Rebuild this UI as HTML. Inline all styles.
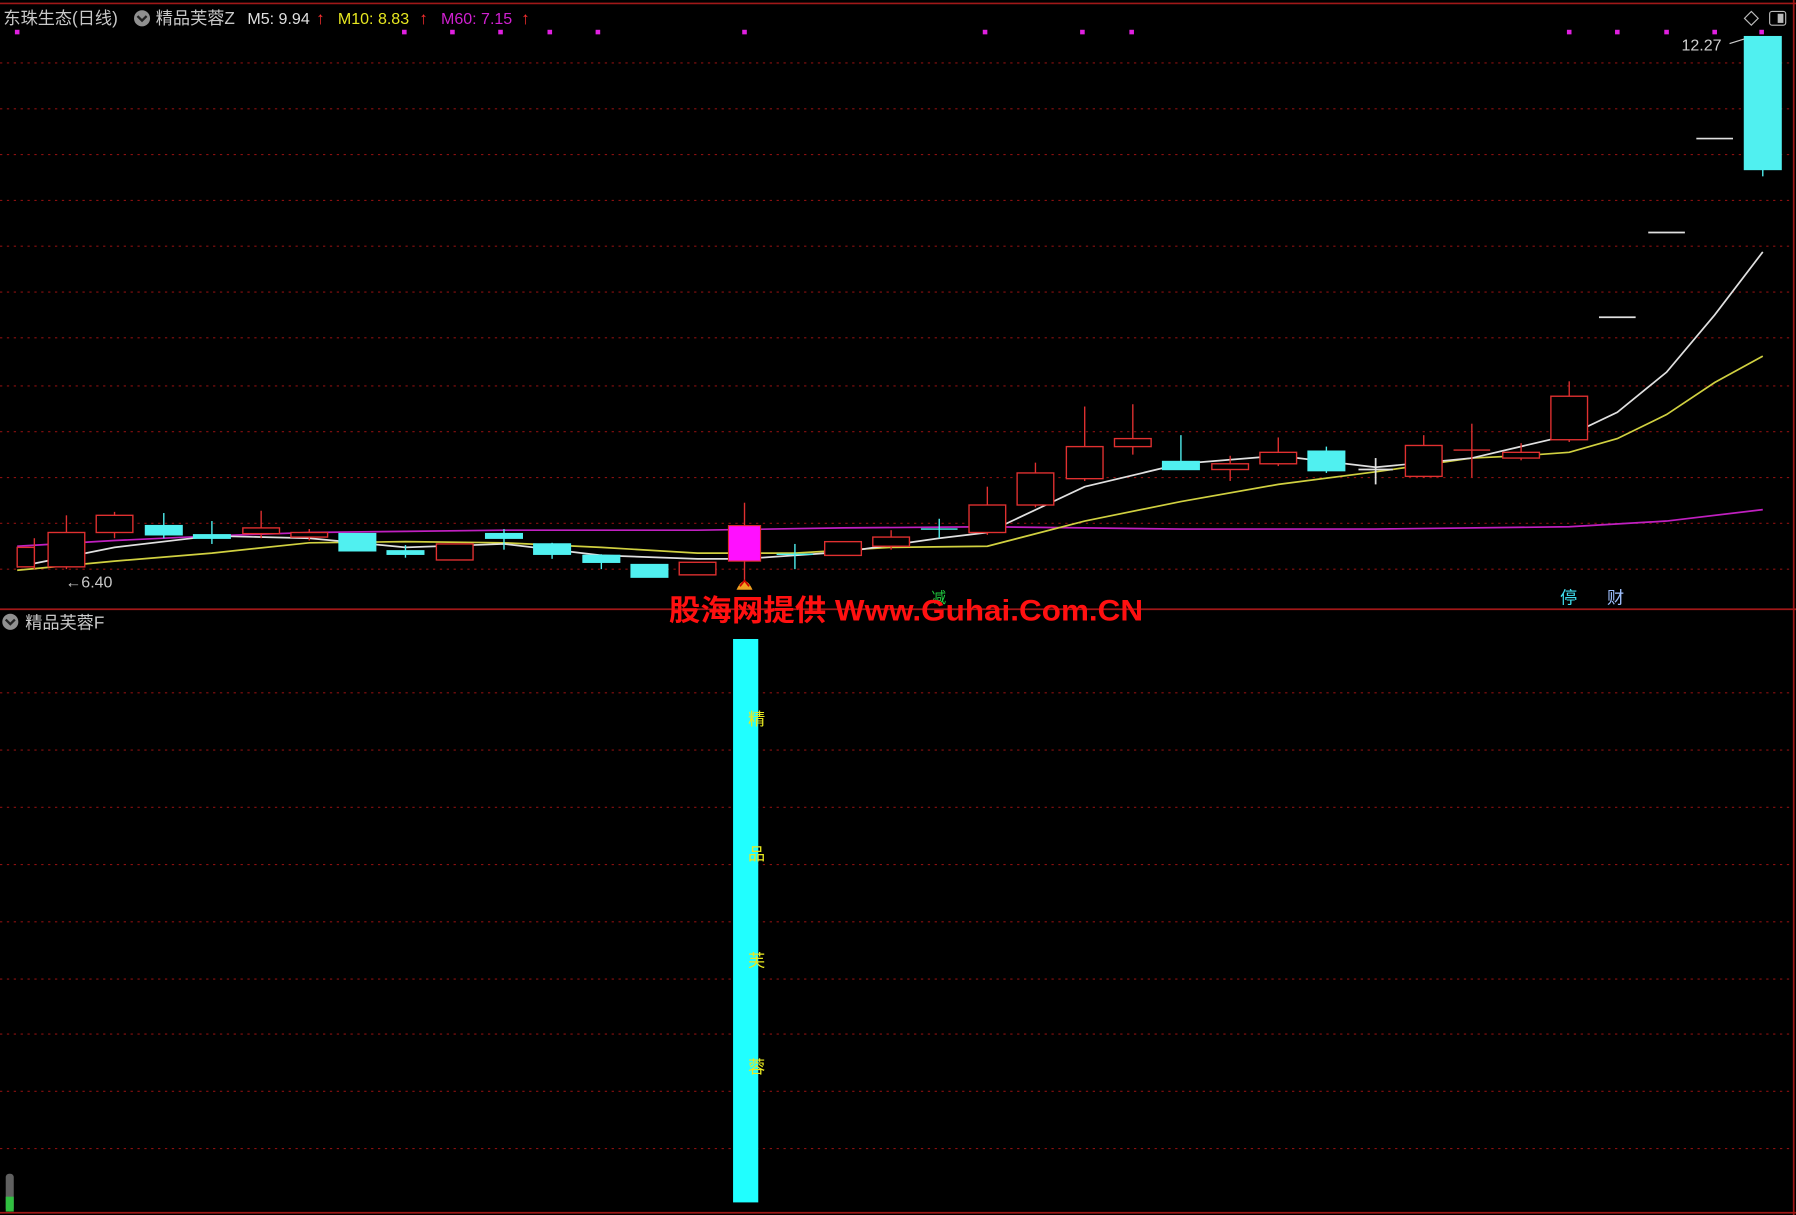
<!DOCTYPE html>
<html><head><meta charset="utf-8"><style>
html,body{margin:0;padding:0;background:#000;width:1796px;height:1215px;overflow:hidden}
svg{display:block}
text{font-family:"Liberation Sans","Noto Sans CJK SC",sans-serif}
</style></head><body>
<svg width="1796" height="1215" viewBox="0 0 1568 1061" preserveAspectRatio="none">
<rect width="1568" height="1061" fill="#000"/>
<g stroke="#8a1010" stroke-width="1" stroke-dasharray="2,4">
<line x1="0" y1="55" x2="1565" y2="55"/><line x1="0" y1="95" x2="1565" y2="95"/>
<line x1="0" y1="135" x2="1565" y2="135"/><line x1="0" y1="175" x2="1565" y2="175"/>
<line x1="0" y1="215" x2="1565" y2="215"/><line x1="0" y1="255" x2="1565" y2="255"/>
<line x1="0" y1="295" x2="1565" y2="295"/><line x1="0" y1="337" x2="1565" y2="337"/>
<line x1="0" y1="377" x2="1565" y2="377"/><line x1="0" y1="417" x2="1565" y2="417"/>
<line x1="0" y1="457" x2="1565" y2="457"/><line x1="0" y1="497" x2="1565" y2="497"/>
<line x1="0" y1="605" x2="1565" y2="605"/><line x1="0" y1="655" x2="1565" y2="655"/>
<line x1="0" y1="705" x2="1565" y2="705"/><line x1="0" y1="755" x2="1565" y2="755"/>
<line x1="0" y1="805" x2="1565" y2="805"/><line x1="0" y1="855" x2="1565" y2="855"/>
<line x1="0" y1="903" x2="1565" y2="903"/><line x1="0" y1="953" x2="1565" y2="953"/>
<line x1="0" y1="1003" x2="1565" y2="1003"/>
</g>
<g stroke="#a01818" stroke-width="1.5" fill="none">
<line x1="0" y1="3" x2="1568" y2="3"/>
<line x1="0" y1="532" x2="1568" y2="532"/>
<line x1="1566" y1="0" x2="1566" y2="1061"/>
<line x1="0" y1="1059" x2="1568" y2="1059"/>
</g>
<g fill="#e020e0">
<rect x="13" y="26" width="4" height="4"/><rect x="351" y="26" width="4" height="4"/><rect x="393" y="26" width="4" height="4"/><rect x="435" y="26" width="4" height="4"/><rect x="478" y="26" width="4" height="4"/><rect x="520" y="26" width="4" height="4"/><rect x="648" y="26" width="4" height="4"/><rect x="858" y="26" width="4" height="4"/><rect x="943" y="26" width="4" height="4"/><rect x="986" y="26" width="4" height="4"/><rect x="1368" y="26" width="4" height="4"/><rect x="1410" y="26" width="4" height="4"/><rect x="1453" y="26" width="4" height="4"/><rect x="1495" y="26" width="4" height="4"/><rect x="1536" y="26" width="4" height="4"/>
</g>
<polyline fill="none" stroke="#c020c0" stroke-width="1.5" points="15,477 100,472 185,468 270,465 354,464 440,463 525,463 609,463 736,461 862,460 947,461 1031,462 1074,462 1201,462 1370,460 1455,455 1539,445"/>
<polyline fill="none" stroke="#d0d040" stroke-width="1.5" points="15,498 100,490 185,483 270,474 354,473 440,474 525,478 609,483 694,483 778,478 862,477 947,455 1031,438 1116,423 1201,412 1285,400 1328,398 1370,395 1412,383 1455,362 1497,334 1539,311"/>
<polyline fill="none" stroke="#e0e0e0" stroke-width="1.5" points="15,495 100,478 185,468 270,470 354,478 440,475 525,485 609,488 650,488 736,482 820,470 862,465 947,425 1031,405 1116,398 1201,408 1285,400 1370,380 1412,360 1455,325 1497,275 1539,220"/>
<g stroke="#e03030" stroke-width="1.2" fill="#000">
<line x1="30" y1="470" x2="30" y2="497"/><rect x="15" y="478" width="15" height="17"/>
<line x1="58" y1="450" x2="58" y2="497"/><rect x="42" y="465" width="32" height="30"/>
<line x1="100" y1="447" x2="100" y2="470"/><rect x="84" y="450" width="32" height="15"/>
<line x1="228" y1="446" x2="228" y2="470"/><rect x="212" y="461" width="32" height="5"/>
<line x1="270" y1="462" x2="270" y2="472"/><rect x="254" y="465" width="32" height="4"/>
<rect x="381" y="475" width="32" height="14"/>
<rect x="593" y="491" width="32" height="11"/>
<rect x="720" y="473" width="32" height="12"/>
<line x1="778" y1="463" x2="778" y2="480"/><rect x="762" y="469" width="32" height="8"/>
<line x1="862" y1="425" x2="862" y2="467"/><rect x="846" y="441" width="32" height="24"/>
<line x1="904" y1="404" x2="904" y2="443"/><rect x="888" y="413" width="32" height="28"/>
<line x1="947" y1="355" x2="947" y2="420"/><rect x="931" y="390" width="32" height="28"/>
<line x1="989" y1="353" x2="989" y2="397"/><rect x="973" y="383" width="32" height="7"/>
<line x1="1074" y1="398" x2="1074" y2="420"/><rect x="1058" y="405" width="32" height="5"/>
<line x1="1116" y1="382" x2="1116" y2="407"/><rect x="1100" y="395" width="32" height="10"/>
<line x1="1243" y1="380" x2="1243" y2="417"/><rect x="1227" y="389" width="32" height="27"/>
<line x1="1285" y1="370" x2="1285" y2="417"/><line x1="1269" y1="393" x2="1301" y2="393"/>
<line x1="1328" y1="387" x2="1328" y2="402"/><rect x="1312" y="395" width="32" height="5"/>
<line x1="1370" y1="333" x2="1370" y2="386"/><rect x="1354" y="346" width="32" height="38"/>
</g>
<g stroke="#50f0f0" stroke-width="1.2" fill="#50f0f0">
<line x1="143" y1="448" x2="143" y2="470"/><rect x="127" y="459" width="32" height="8"/>
<line x1="185" y1="455" x2="185" y2="475"/><rect x="169" y="467" width="32" height="3"/>
<rect x="296" y="466" width="32" height="15"/>
<line x1="354" y1="476" x2="354" y2="487"/><rect x="338" y="481" width="32" height="3"/>
<line x1="440" y1="462" x2="440" y2="480"/><rect x="424" y="466" width="32" height="4"/>
<line x1="482" y1="474" x2="482" y2="488"/><rect x="466" y="475" width="32" height="9"/>
<line x1="525" y1="484" x2="525" y2="497"/><rect x="509" y="485" width="32" height="6"/>
<rect x="551" y="493" width="32" height="11"/>
<line x1="694" y1="475" x2="694" y2="497"/><line x1="678" y1="484" x2="710" y2="484"/>
<line x1="820" y1="453" x2="820" y2="470"/><line x1="804" y1="462" x2="836" y2="462"/>
<line x1="1031" y1="380" x2="1031" y2="410"/><rect x="1015" y="403" width="32" height="7"/>
<line x1="1158" y1="390" x2="1158" y2="413"/><rect x="1142" y="394" width="32" height="17"/>
<line x1="1539" y1="148" x2="1539" y2="154"/><rect x="1523" y="32" width="32" height="116"/>
</g>
<g stroke="#e0e0e0" stroke-width="1.5">
<line x1="1201" y1="400" x2="1201" y2="423"/><line x1="1186" y1="410" x2="1216" y2="410"/>
<line x1="1396" y1="277" x2="1428" y2="277"/><line x1="1439" y1="203" x2="1471" y2="203"/><line x1="1481" y1="121" x2="1513" y2="121"/>
</g>
<line x1="650" y1="439" x2="650" y2="510" stroke="#e03030" stroke-width="1.2"/>
<rect x="636" y="459" width="28" height="31" fill="#ff10ff" stroke="#e03030"/>
<path d="M643 515 Q650 500 657 515 Z" fill="#f0a020"/><path d="M646 512 L650 507 L654 512" stroke="#c00" fill="none" stroke-width="1.5"/>
<text x="3" y="21" font-size="15" fill="#c8c8c8">东珠生态(日线)</text>
<circle cx="124" cy="16" r="7" fill="#909090"/><path d="M120 14 L124 18 L128 14" stroke="#222" stroke-width="2" fill="none"/>
<text x="136" y="21" font-size="15" fill="#c8c8c8">精品芙蓉Z</text>
<text x="216" y="21" font-size="14" fill="#e0e0e0">M5: 9.94</text>
<text x="276" y="21" font-size="15" fill="#ff3030">↑</text>
<text x="295" y="21" font-size="14" fill="#e8e820">M10: 8.83</text>
<text x="366" y="21" font-size="15" fill="#ff3030">↑</text>
<text x="385" y="21" font-size="14" fill="#d020d0">M60: 7.15</text>
<text x="455" y="21" font-size="15" fill="#ff3030">↑</text>
<path d="M1529 10 L1535 16 L1529 22 L1523 16 Z" stroke="#bbb" fill="none"/>
<rect x="1545" y="10" width="14" height="12" rx="2" stroke="#bbb" fill="none"/><rect x="1552" y="12" width="5" height="8" fill="#bbb"/>
<text x="1468" y="44" font-size="14" fill="#d0d0d0">12.27</text>
<line x1="1510" y1="38" x2="1523" y2="34" stroke="#ccc"/>
<text x="57" y="513" font-size="14" fill="#c8c8c8">←6.40</text>
<text x="813" y="526" font-size="13" fill="#20d040">减</text>
<text x="1362" y="527" font-size="15" fill="#40e0f0">停</text>
<text x="1403" y="527" font-size="15" fill="#a0c0ff">财</text>
<text x="584" y="542" font-size="26" font-weight="bold" fill="#ff1010" textLength="414" lengthAdjust="spacingAndGlyphs">股海网提供 Www.Guhai.Com.CN</text>
<circle cx="9" cy="543" r="7" fill="#909090"/><path d="M5 541 L9 545 L13 541" stroke="#222" stroke-width="2" fill="none"/>
<text x="22" y="549" font-size="15" fill="#c8c8c8">精品芙蓉F</text>
<rect x="640" y="558" width="22" height="492" fill="#20ffff"/>
<g font-size="15" fill="#e8e820">
<text x="653" y="633">精</text><text x="653" y="751">品</text><text x="653" y="844">芙</text><text x="653" y="937">蓉</text>
</g>
<rect x="5" y="1025" width="7" height="33" rx="3" fill="#606060"/><rect x="5" y="1045" width="7" height="13" fill="#30c040"/>
</svg>
</body></html>
